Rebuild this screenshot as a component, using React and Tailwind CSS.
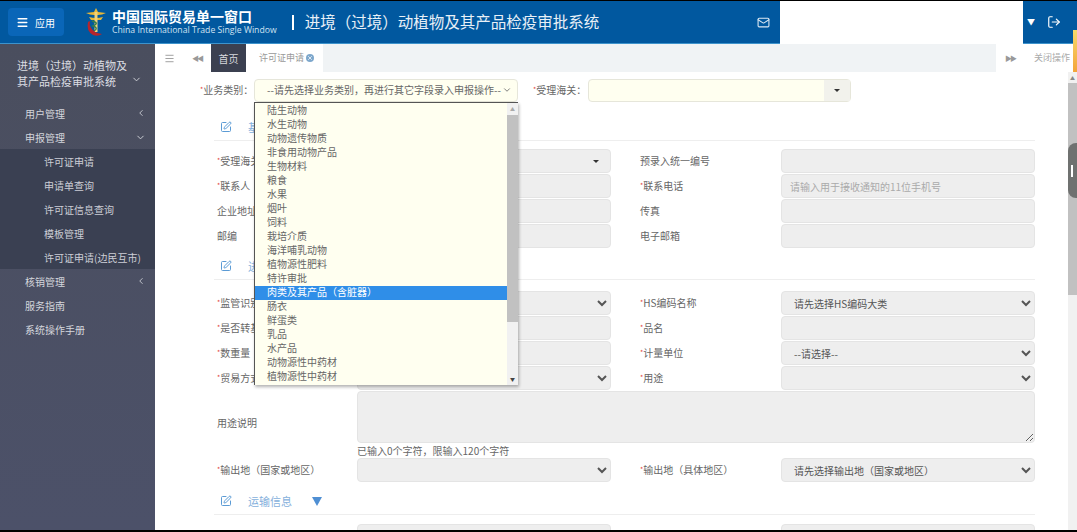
import { ChevronDown, ChevronLeft, LogOut, Mail, Menu, SquarePen, X } from "lucide-react";

const categories = [
  "陆生动物", "水生动物", "动物遗传物质", "非食用动物产品", "生物材料", "粮食", "水果", "烟叶", "饲料", "栽培介质",
  "海洋哺乳动物", "植物源性肥料", "特许审批", "肉类及其产品（含脏器）", "肠衣", "鲜蛋类", "乳品", "水产品",
  "动物源性中药材", "植物源性中药材",
];

const Logo = () => (
  <svg width="24" height="30" viewBox="0 0 24 30" className="mr-[4px] shrink-0">
    <path d="M12 1 L14 5 L22 6 Q18 8 14 8 L10 8 Q6 8 2 6 L10 5 Z" fill="#e8b838" />
    <path d="M5 10 Q12 12 19 10 L17 13 L7 13 Z" fill="#e8b838" />
    <rect x="10.5" y="5" width="3" height="20" fill="#f0d27a" />
    <path d="M8 14 Q16 16 9 19 Q15 21 10 24" stroke="#2f7d4f" strokeWidth="1.4" fill="none" />
    <path d="M4 15 Q2 24 9 28 Q14 30 18 27 Q10 26 7 21 Q5 18 6 14 Z" fill="#b8242c" />
  </svg>
);

const Caret = () => <span className="h-0 w-0 border-x-[3px] border-t-[3px] border-x-transparent border-t-[#333]" />;

const SideItem = ({ children, icon }) => (
  <div className="flex h-6 items-center justify-between pl-[25px] pr-[9px] text-[10px] text-[#d4d6dc]">
    <span>{children}</span>
    {icon}
  </div>
);

const SubItem = ({ children }) => (
  <div className="flex h-6 items-center pl-[44px] text-[10px] text-[#ccced6]">{children}</div>
);

const Label = ({ text, required, className = "" }) => (
  <div className={`flex items-center whitespace-nowrap pb-[2px] text-[10px] text-[#666] ${className}`}>
    {required && <span className="text-[7px] text-[#e2453c]">*</span>}
    {text}
  </div>
);

const Input = ({ placeholder }) => (
  <input
    disabled
    placeholder={placeholder}
    className="h-6 w-[254px] rounded border border-[#e4e4e4] bg-[#eeeeee] px-2 text-[10px] placeholder:text-[#aaa]"
  />
);

const Select = ({ value = "" }) => (
  <select className="h-6 w-[254px] rounded border border-[#e4e4e4] bg-[#eeeeee] px-2 text-[10px] text-[#555]">
    <option>{value}</option>
  </select>
);

const Row = ({ left, right }) => (
  <div className="mb-px flex h-6">
    <Label {...left.label} className="w-[143px] pl-[3px]" />
    {left.field}
    <Label {...right.label} className="w-[170px] pl-[29px]" />
    {right.field}
  </div>
);

const Section = ({ title, caret, className = "" }) => (
  <div className={`flex h-[26px] items-center border-b border-[#eeeeee] pb-px ${className}`}>
    <SquarePen size={12} className="ml-[6px] text-[#5b9bd5]" />
    <span className="ml-[16px] text-[11px] text-[#85b0dc]">{title}</span>
    {caret && <span className="ml-[20px] h-0 w-0 border-x-[5px] border-t-[9px] border-x-transparent border-t-[#4f8fd3]" />}
  </div>
);

export default function App() {
  return (
    <div
      className="relative flex h-[532px] w-[1077px] flex-col overflow-hidden bg-white"
      style={{ fontFamily: '"Noto Sans CJK SC", "Liberation Sans", sans-serif' }}
    >
      <div className="h-px shrink-0 bg-black" />

      {/* Top bar */}
      <div className="flex h-[43px] shrink-0">
        <div className="flex w-[780px] items-center border-b border-[#3d93cc] bg-[#01589f] pl-2 pr-[10px] text-white">
          <div className="flex h-7 w-14 items-center rounded-sm bg-[#0a66b8] pl-2">
            <Menu size={13} strokeWidth={2.5} />
            <span className="ml-[6px] text-[10px]">应用</span>
          </div>
          <div className="ml-[20px]">
            <Logo />
          </div>
          <div className="flex flex-col">
            <span className="text-[14px] font-bold leading-[17px]">中国国际贸易单一窗口</span>
            <span className="whitespace-nowrap text-[8.7px] leading-[11px] text-[#cfe2f2]" style={{ fontFamily: '"Open Sans", sans-serif' }}>
              China International Trade Single Window
            </span>
          </div>
          <span className="ml-[15px] h-[15px] w-[2px] bg-white" />
          <span className="ml-[11px] whitespace-nowrap text-[15.5px] text-[#e8f0f7]">进境（过境）动植物及其产品检疫审批系统</span>
          <Mail size={13} className="ml-auto text-[#dbe8f3]" />
        </div>
        <div className="flex-1" />
        <div className="flex w-[54px] items-center border-b border-[#3d93cc] bg-[#01589f] pl-[4px] text-white">
          <span className="text-[8px]">▼</span>
          <LogOut size={14} className="ml-[12px]" />
        </div>
      </div>

      <div className="flex min-h-0 flex-1">
        {/* Sidebar */}
        <div className="w-[155px] shrink-0 bg-gradient-to-b from-[#4a4e5e] to-[#4c5169]">
          <div className="flex h-[57px] items-start justify-between pl-[17px] pr-[13px] pt-[13px]">
            <div className="text-[11px] leading-4 text-[#dcdee3]">
              进境（过境）动植物及
              <br />
              其产品检疫审批系统
            </div>
            <ChevronDown size={11} className="mt-[17px] shrink-0 text-[#d4d6dc]" />
          </div>
          <SideItem icon={<ChevronLeft size={10} />}>用户管理</SideItem>
          <SideItem icon={<ChevronDown size={11} />}>申报管理</SideItem>
          <div className="bg-[#3a4052]">
            <SubItem>许可证申请</SubItem>
            <SubItem>申请单查询</SubItem>
            <SubItem>许可证信息查询</SubItem>
            <SubItem>模板管理</SubItem>
            <SubItem>许可证申请(边民互市)</SubItem>
          </div>
          <SideItem icon={<ChevronLeft size={10} />}>核销管理</SideItem>
          <SideItem>服务指南</SideItem>
          <SideItem>系统操作手册</SideItem>
        </div>

        <div className="flex min-w-0 flex-1 flex-col">
          {/* Tab bar */}
          <div className="flex h-7 shrink-0 items-stretch text-[9px]">
            <div className="flex w-[28px] items-center justify-center text-[#999]">
              <Menu size={11} />
            </div>
            <div className="flex w-[28px] items-center justify-center text-[7px] tracking-[-2px] text-[#999]">◀◀</div>
            <div className="flex w-[35px] items-center justify-center bg-[#3b4050] text-[10px] text-[#d8dade]">首页</div>
            <div className="flex w-[77px] items-center justify-end gap-[2px] pr-[9px] text-[#999]">
              许可证申请
              <span className="flex h-[8px] w-[8px] items-center justify-center rounded-full bg-[#7da7cc] text-white">
                <X size={6} strokeWidth={3} />
              </span>
            </div>
            <div className="flex-1 bg-[#f0f3f5]" />
            <div className="flex w-[28px] items-center justify-center text-[7px] tracking-[-2px] text-[#999]">▶▶</div>
            <div className="flex w-[53px] items-center whitespace-nowrap pl-[10px] text-[#aaa]">关闭操作</div>
          </div>

          <div className="flex min-h-0 flex-1">
            {/* Form */}
            <div className="min-w-0 flex-1 overflow-hidden">
              <div className="flex h-[30px] items-end">
                <Label text="业务类别：" required className="ml-[45px] h-[23px] w-[54px]" />
                <div className="flex h-[23px] w-[264px] items-center justify-between rounded-sm border border-[#e6e6da] bg-[#fffff0] pb-[2px] pl-[12px] pr-[5px] text-[10px] text-[#666]">
                  <span className="whitespace-nowrap">--请先选择业务类别，再进行其它字段录入申报操作--</span>
                  <ChevronDown size={10} className="shrink-0" />
                </div>
                <Label text="受理海关：" required className="ml-[15px] h-[23px] w-[55px]" />
                <div className="flex h-[23px] w-[263px] items-stretch rounded-sm border border-[#e6e6da] bg-[#fffff0]">
                  <div className="flex-1" />
                  <div className="flex w-[26px] items-center justify-center bg-[#f2f2ec]">
                    <Caret />
                  </div>
                </div>
              </div>

              <div className="ml-[59px] w-[821px]">
                <Section title="基本信息" className="mt-[13px]" />
                <div className="mt-2">
                  <Row
                    left={{
                      label: { text: "受理海关", required: true },
                      field: (
                        <div className="flex h-6 w-[254px] items-center justify-end rounded border border-[#e4e4e4] bg-[#eeeeee] pr-[11px]">
                          <Caret />
                        </div>
                      ),
                    }}
                    right={{ label: { text: "预录入统一编号" }, field: <Input /> }}
                  />
                  <Row
                    left={{ label: { text: "联系人", required: true }, field: <Input /> }}
                    right={{ label: { text: "联系电话", required: true }, field: <Input placeholder="请输入用于接收通知的11位手机号" /> }}
                  />
                  <Row
                    left={{ label: { text: "企业地址" }, field: <Input /> }}
                    right={{ label: { text: "传真" }, field: <Input /> }}
                  />
                  <Row
                    left={{ label: { text: "邮编" }, field: <Input /> }}
                    right={{ label: { text: "电子邮箱" }, field: <Input /> }}
                  />
                </div>

                <Section title="进境信息" className="mt-[6px]" />
                <div className="mt-[11px]">
                  <Row
                    left={{ label: { text: "监管识别码", required: true }, field: <Select /> }}
                    right={{ label: { text: "HS编码名称", required: true }, field: <Select value="请先选择HS编码大类" /> }}
                  />
                  <Row
                    left={{ label: { text: "是否转基因", required: true }, field: <Input /> }}
                    right={{ label: { text: "品名", required: true }, field: <Input /> }}
                  />
                  <Row
                    left={{ label: { text: "数重量", required: true }, field: <Input /> }}
                    right={{ label: { text: "计量单位", required: true }, field: <Select value="--请选择--" /> }}
                  />
                  <Row
                    left={{ label: { text: "贸易方式", required: true }, field: <Select /> }}
                    right={{ label: { text: "用途", required: true }, field: <Select /> }}
                  />
                  <div className="flex h-[52px]">
                    <Label text="用途说明" className="w-[143px] pl-[3px] pt-[12px]" />
                    <textarea disabled className="h-[52px] w-[678px] rounded border border-[#e4e4e4] bg-[#eeeeee]" />
                  </div>
                  <div className="flex h-[15px] items-center pl-[143px] text-[10px] text-[#666]">已输入0个字符，限输入120个字符</div>
                  <Row
                    left={{ label: { text: "输出地（国家或地区）", required: true }, field: <Select /> }}
                    right={{ label: { text: "输出地（具体地区）", required: true }, field: <Select value="请先选择输出地（国家或地区）" /> }}
                  />
                </div>

                <Section title="运输信息" caret className="mt-[7px]" />
                <div className="mt-[9px] flex">
                  <div className="w-[143px]" />
                  <Input />
                  <div className="w-[170px]" />
                  <Input />
                </div>
              </div>
            </div>

            {/* Page scrollbar */}
            <div className="flex w-[9px] shrink-0 flex-col bg-[#f1f1f1]">
              <div className="flex h-[11px] items-center justify-center text-[5px] text-[#888]">▲</div>
              <div className="h-[212px] bg-[#c1c1c1]" />
            </div>
          </div>
        </div>
      </div>
      <div className="h-[2px] shrink-0 bg-black" />

      {/* Open select list */}
      <div className="absolute left-[254px] top-[102px] flex h-[283px] w-[264px] border-l border-t border-[#555] bg-[#fffff0] shadow-[1px_2px_3px_rgba(0,0,0,0.3)]">
        <div className="flex-1 pt-px text-[10px] text-[#666]">
          {categories.map((c) => (
            <div
              key={c}
              className={`flex h-[14px] items-center pb-[3px] pl-[12px] ${c.startsWith("肉类") ? "bg-[#2f8ee8] text-white" : ""}`}
            >
              {c}
            </div>
          ))}
        </div>
        <div className="flex w-[11px] flex-col bg-[#f1f1f1]">
          <div className="flex h-[12px] items-center justify-center text-[5px] text-[#aaa]">▲</div>
          <div className="h-[207px] bg-[#c1c1c1]" />
          <div className="mt-auto flex h-[12px] items-center justify-center text-[5px] text-[#444]">▼</div>
        </div>
      </div>

      {/* Overlays at the window edge */}
      <div className="absolute right-0 top-[30px] h-[42px] w-[4px] bg-gradient-to-b from-[#f5d96b] to-[#f3a43a]" />
      <div className="absolute right-0 top-[143px] flex h-[55px] w-[9px] items-center rounded-l-[8px] bg-[#6f7170] pl-[3px]">
        <span className="h-[12px] w-[2px] bg-white" />
      </div>
    </div>
  );
}
